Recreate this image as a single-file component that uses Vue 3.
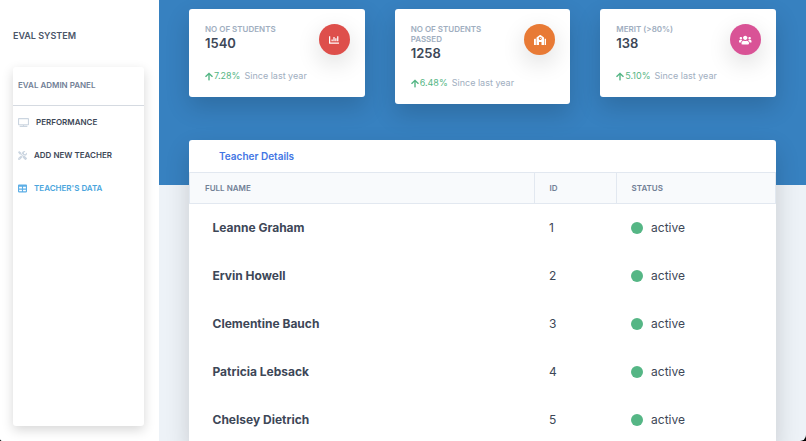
<script setup>
const icons = {
  tv: { box: '0 0 640 512', d: 'M592 0H48A48 48 0 0 0 0 48v320a48 48 0 0 0 48 48h240v32H112a16 16 0 0 0-16 16v32a16 16 0 0 0 16 16h416a16 16 0 0 0 16-16v-32a16 16 0 0 0-16-16H352v-32h240a48 48 0 0 0 48-48V48a48 48 0 0 0-48-48zm-16 352H64V64h512z' },
  tools: { box: '0 0 512 512', d: 'M501.1 395.7L384 278.6c-23.1-23.1-57.6-27.6-85.4-13.9L192 158.1V96L64 0 0 64l96 128h62.1l106.6 106.6c-13.6 27.8-9.2 62.3 13.9 85.4l117.1 117.1c14.6 14.6 38.2 14.6 52.7 0l52.7-52.7c14.5-14.6 14.5-38.2 0-52.7zM331.7 225c28.3 0 54.9 11 74.9 31l19.4 19.4c15.8-6.9 30.8-16.5 43.8-29.5 37.1-37.1 49.7-89.3 37.9-136.7-2.2-9-13.5-12.1-20.1-5.5l-74.4 74.4-67.9-11.3L334 98.9l74.4-74.4c6.6-6.6 3.4-17.9-5.7-20.2-47.4-11.7-99.6.9-136.6 37.9-28.5 28.5-41.9 66.1-41.2 103.6l82.1 82.1c8.1-1.9 16.5-2.9 24.7-2.9zm-103.9 82l-56.7-56.7L18.7 402.8c-25 25-25 65.5 0 90.5s65.5 25 90.5 0l123.6-123.6c-7.6-19.9-9.9-41.6-5-62.7zM64 472c-13.2 0-24-10.8-24-24 0-13.3 10.7-24 24-24s24 10.7 24 24c0 13.2-10.7 24-24 24z' },
  table: { box: '0 0 512 512', d: 'M464 32H48C21.49 32 0 53.49 0 80v352c0 26.51 21.49 48 48 48h416c26.51 0 48-21.49 48-48V80c0-26.51-21.49-48-48-48zM224 416H64v-96h160v96zm0-160H64v-96h160v96zm224 160H288v-96h160v96zm0-160H288v-96h160v96z' },
  chart: { box: '0 0 512 512', d: 'M332.8 320h38.4c6.4 0 12.8-6.4 12.8-12.8V172.8c0-6.4-6.4-12.8-12.8-12.8h-38.4c-6.4 0-12.8 6.4-12.8 12.8v134.4c0 6.4 6.4 12.8 12.8 12.8zm96 0h38.4c6.4 0 12.8-6.4 12.8-12.8V76.8c0-6.4-6.4-12.8-12.8-12.8h-38.4c-6.4 0-12.8 6.4-12.8 12.8v230.4c0 6.4 6.4 12.8 12.8 12.8zm-288 0h38.4c6.4 0 12.8-6.4 12.8-12.8v-70.4c0-6.4-6.4-12.8-12.8-12.8h-38.4c-6.4 0-12.8 6.4-12.8 12.8v70.4c0 6.4 6.4 12.8 12.8 12.8zm96 0h38.4c6.4 0 12.8-6.4 12.8-12.8V108.8c0-6.4-6.4-12.8-12.8-12.8h-38.4c-6.4 0-12.8 6.4-12.8 12.8v198.4c0 6.4 6.4 12.8 12.8 12.8zM496 384H64V80c0-8.84-7.16-16-16-16H16C7.16 64 0 71.16 0 80v336c0 17.67 14.33 32 32 32h464c8.84 0 16-7.16 16-16v-32c0-8.84-7.16-16-16-16z' },
  school: { box: '0 0 640 512', d: 'M0 224v272c0 8.84 7.16 16 16 16h80V192H32c-17.67 0-32 14.33-32 32zm360-48h-24v-40c0-4.42-3.58-8-8-8h-16c-4.42 0-8 3.58-8 8v64c0 4.42 3.58 8 8 8h48c4.42 0 8-3.58 8-8v-16c0-4.42-3.58-8-8-8zm137.75-63.96l-160-106.67a32.02 32.02 0 0 0-35.5 0l-160 106.67A32.002 32.002 0 0 0 128 138.66V512h128V368c0-8.84 7.16-16 16-16h96c8.84 0 16 7.16 16 16v144h128V138.67c0-10.7-5.35-20.69-14.25-26.63zM320 256c-44.18 0-80-35.82-80-80s35.82-80 80-80 80 35.82 80 80-35.82 80-80 80zM544 192h64c17.67 0 32 14.33 32 32v272c0 8.84-7.16 16-16 16h-80z' },
  users: { box: '0 0 640 512', d: 'M96 224c35.3 0 64-28.7 64-64s-28.7-64-64-64-64 28.7-64 64 28.7 64 64 64zm448 0c35.3 0 64-28.7 64-64s-28.7-64-64-64-64 28.7-64 64 28.7 64 64 64zm32 32h-64c-17.6 0-33.5 7.1-45.1 18.6 40.3 22.1 68.9 62 75.1 109.4h66c17.7 0 32-14.3 32-32v-32c0-35.3-28.7-64-64-64zm-256 0c61.9 0 112-50.1 112-112S381.9 32 320 32 208 82.1 208 144s50.1 112 112 112zm76.8 32h-8.3c-20.8 10-43.9 16-68.5 16s-47.6-6-68.5-16h-8.3C179.6 288 128 339.6 128 403.2V432c0 26.5 21.5 48 48 48h288c26.5 0 48-21.5 48-48v-28.8c0-63.6-51.6-115.2-115.2-115.2zm-223.7-13.4C161.5 263.1 145.6 256 128 256H64c-35.3 0-64 28.7-64 64v32c0 17.7 14.3 32 32 32h65.9c6.3-47.4 34.9-87.3 75.2-109.4z' },
  up: { box: '0 0 448 512', d: 'M34.9 289.5l-22.2-22.2c-9.4-9.4-9.4-24.6 0-33.9L207 39c9.4-9.4 24.6-9.4 33.9 0l194.3 194.3c9.4 9.4 9.4 24.6 0 33.9L413 289.4c-9.5 9.5-25 9.3-34.3-.4L264 168.6V456c0 13.3-10.7 24-24 24h-32c-13.3 0-24-10.7-24-24V168.6L69.2 289.1c-9.3 9.8-24.8 10-34.3.4z' },
}

const links = [
  { icon: 'tv', label: 'Performance' },
  { icon: 'tools', label: 'Add new teacher' },
  { icon: 'table', label: "Teacher's data", active: true },
]

const stats = [
  { label: 'No of students', value: '1540', change: '7.28%', icon: 'chart', tone: 'red' },
  { label: 'No of students passed', value: '1258', change: '6.48%', icon: 'school', tone: 'orange' },
  { label: 'Merit (>80%)', value: '138', change: '5.10%', icon: 'users', tone: 'pink' },
]

const teachers = [
  { id: 1, name: 'Leanne Graham' },
  { id: 2, name: 'Ervin Howell' },
  { id: 3, name: 'Clementine Bauch' },
  { id: 4, name: 'Patricia Lebsack' },
  { id: 5, name: 'Chelsey Dietrich' },
]
</script>

<template>
  <div class="app">
    <aside class="sidebar">
      <a class="brand" href="#">Eval System</a>
      <nav class="panel">
        <h2 class="panel-title">Eval Admin Panel</h2>
        <ul class="links">
          <li v-for="link in links" :key="link.label">
            <a href="#" class="link" :class="{ active: link.active }">
              <svg class="link-icon" :class="{ wide: link.icon === 'tv' }" :viewBox="icons[link.icon].box" aria-hidden="true">
                <path :d="icons[link.icon].d" />
              </svg>
              <span>{{ link.label }}</span>
            </a>
          </li>
        </ul>
      </nav>
    </aside>

    <main class="main">
      <section class="stats">
        <article v-for="stat in stats" :key="stat.label" class="stat">
          <div class="stat-top">
            <div>
              <h3 class="stat-label">{{ stat.label }}</h3>
              <div class="stat-value">{{ stat.value }}</div>
            </div>
            <div class="badge" :class="stat.tone">
              <svg class="badge-icon" :viewBox="icons[stat.icon].box" aria-hidden="true">
                <path :d="icons[stat.icon].d" />
              </svg>
            </div>
          </div>
          <p class="trend">
            <span class="change">
              <svg class="arrow" :viewBox="icons.up.box" aria-hidden="true"><path :d="icons.up.d" /></svg>
              {{ stat.change }}
            </span>
            <span>Since last year</span>
          </p>
        </article>
      </section>

      <section class="details">
        <h3 class="details-title">Teacher Details</h3>
        <table class="table">
          <thead>
            <tr>
              <th class="col-name">Full name</th>
              <th class="col-id">ID</th>
              <th>Status</th>
            </tr>
          </thead>
          <tbody>
            <tr v-for="teacher in teachers" :key="teacher.id">
              <td class="name">{{ teacher.name }}</td>
              <td>{{ teacher.id }}</td>
              <td><div class="status"><span class="dot"></span>active</div></td>
            </tr>
          </tbody>
        </table>
      </section>
    </main>
  </div>
</template>

<style>
body {
  margin: 0;
  background: #000;
}
</style>

<style scoped>
* {
  box-sizing: border-box;
}

h2, h3, p, ul {
  margin: 0;
  padding: 0;
}

.app {
  display: flex;
  height: 100vh;
  overflow: hidden;
  border-radius: 0 0 6px 3px;
  background: #edf2f7;
  color: #3d4757;
  font-family: Inter, "Liberation Sans", sans-serif;
}

a {
  color: inherit;
  text-decoration: none;
}

.sidebar {
  display: flex;
  flex: 0 0 159px;
  flex-direction: column;
  padding: 28px 15px 15px 13px;
  background: #fff;
}

.brand {
  margin-bottom: 23px;
  color: #4a5568;
  font-size: 9px;
  font-weight: 600;
  line-height: 16px;
  text-transform: uppercase;
}

.panel {
  flex: 1;
  border-radius: 3px;
  background: #fff;
  box-shadow: 0 4px 12px rgba(0, 0, 0, 0.16);
}

.panel-title {
  padding: 12px 5px 13px;
  border-bottom: 1px solid #d5dae1;
  color: #718096;
  font-size: 8px;
  font-weight: 600;
  line-height: 13px;
  text-transform: uppercase;
}

.links {
  list-style: none;
}

.link {
  display: flex;
  align-items: center;
  gap: 7px;
  height: 33px;
  padding: 0 0 1px 5px;
  font-size: 8px;
  font-weight: 600;
  text-transform: uppercase;
}

.link-icon {
  width: 9px;
  height: 9px;
  fill: #cbd5e0;
}

.link-icon.wide {
  width: 11px;
}

.link.active {
  color: #4aa5dd;
}

.link.active .link-icon {
  fill: #5caee6;
}

.main {
  flex: 1;
  min-width: 0;
}

.stats {
  display: grid;
  grid-template-columns: repeat(3, 1fr);
  gap: 30px;
  align-items: start;
  padding: 9px 30px 81px;
  background: #3781c0;
}

.stat {
  padding: 15px 15px 15px 16px;
  border-radius: 3px;
  background: #fff;
  box-shadow: 0 10px 24px rgba(0, 0, 0, 0.16);
}

.stat-top {
  display: flex;
  justify-content: space-between;
  gap: 15px;
}

.stat-label {
  color: #a0aec0;
  font-size: 8px;
  font-weight: 600;
  line-height: 10px;
  text-transform: uppercase;
}

.stat-value {
  font-size: 13px;
  font-weight: 600;
  line-height: 18px;
}

.badge {
  display: flex;
  flex: 0 0 31px;
  align-items: center;
  justify-content: center;
  height: 31px;
  border-radius: 50%;
  box-shadow: 0 8px 24px rgba(0, 0, 0, 0.14);
}

.badge.red { background: #de4f4b; }
.badge.orange { background: #e87a35; }
.badge.pink { background: #d95396; }

.badge-icon {
  height: 10px;
  fill: #fff;
}

.trend {
  display: flex;
  gap: 4px;
  margin-top: 15px;
  color: #a0aec0;
  font-size: 9px;
  line-height: 12px;
}

.change {
  display: flex;
  gap: 1px;
  align-items: center;
  color: #55b685;
}

.arrow {
  width: 8px;
  height: 9px;
  fill: currentColor;
}

.details {
  position: relative;
  margin: -45px 30px 0;
  border-radius: 3px;
  background: #fff;
  box-shadow: 0 10px 24px rgba(0, 0, 0, 0.16);
}

.details-title {
  padding: 0 30px;
  color: #4376e4;
  font-size: 10px;
  font-weight: 600;
  line-height: 32px;
}

.table {
  width: 100%;
  border-collapse: collapse;
  table-layout: fixed;
}

th {
  height: 31px;
  padding: 0 15px;
  border: 1px solid #e2e8f0;
  background: #f8fafc;
  color: #718096;
  font-size: 8px;
  font-weight: 600;
  text-align: left;
  text-transform: uppercase;
}

.col-name { width: 58.8%; }
.col-id { width: 14%; }

td {
  height: 48px;
  padding: 0 15px;
  font-size: 12px;
}

td.name {
  padding-left: 23px;
  font-weight: 700;
}

.status {
  display: flex;
  align-items: center;
  gap: 8px;
}

.dot {
  width: 12px;
  height: 12px;
  border-radius: 50%;
  background: #55b685;
}
</style>
